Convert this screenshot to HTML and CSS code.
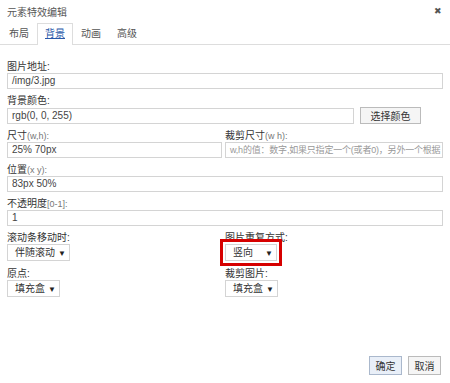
FILE: index.html
```html
<!DOCTYPE html>
<html lang="zh">
<head>
    <meta charset="UTF-8">
    <title>元素特效编辑</title>
    <link rel="stylesheet" href="styles.css">
</head>
<body>
<div class="dialog">
    <div class="header">
        <span class="title">元素特效编辑</span>
        <span class="close">&#x2716;</span>
    </div>

    <div class="tabs">
        <span class="tab">布局</span>
        <span class="tab active">背景</span>
        <span class="tab">动画</span>
        <span class="tab">高级</span>
    </div>

    <div class="form">
        <div class="field">
            <label>图片地址:</label>
            <div class="input">/img/3.jpg</div>
        </div>

        <div class="field">
            <label>背景颜色:</label>
            <div class="color-row">
                <div class="input">rgb(0, 0, 255)</div>
                <button class="btn pick">选择颜色</button>
            </div>
        </div>

        <div class="cols">
            <div class="field">
                <label>尺寸<small>(w,h):</small></label>
                <div class="input">25% 70px</div>
            </div>
            <div class="field">
                <label>裁剪尺寸<small>(w h):</small></label>
                <div class="input placeholder">w,h的值：数字,如果只指定一个(或者0)，另外一个根据</div>
            </div>
        </div>

        <div class="field">
            <label>位置<small>(x y):</small></label>
            <div class="input">83px 50%</div>
        </div>

        <div class="field">
            <label>不透明度<small>[0-1]:</small></label>
            <div class="input">1</div>
        </div>

        <div class="cols">
            <div class="field">
                <label>滚动条移动时:</label>
                <div class="select">伴随滚动<span class="arrow">&#x25BC;</span></div>
            </div>
            <div class="field">
                <label>图片重复方式:</label>
                <div class="select marked">竖向<span class="arrow">&#x25BC;</span></div>
            </div>
        </div>

        <div class="cols">
            <div class="field">
                <label>原点:</label>
                <div class="select">填充盒<span class="arrow">&#x25BC;</span></div>
            </div>
            <div class="field">
                <label>裁剪图片:</label>
                <div class="select">填充盒<span class="arrow">&#x25BC;</span></div>
            </div>
        </div>
    </div>

    <div class="footer">
        <button class="btn ok">确定</button>
        <button class="btn">取消</button>
    </div>
</div>
</body>
</html>
```

FILE: styles.css
```css
body {
    margin: 0;
    font-family: "Liberation Sans", "Noto Sans CJK SC", sans-serif;
    font-size: 10px;
    color: #444;
    background: #fff;
}
.dialog {
    width: 450px;
    height: 383px;
    display: flex;
    flex-direction: column;
}
.header {
    height: 22px;
    padding: 0 7px;
    display: flex;
    justify-content: space-between;
    align-items: center;
}
.title {
    color: #555;
}
.close {
    font-size: 9px;
    color: #555;
    margin-right: 1px;
}
/* tab strip */
.tabs {
    height: 22px;
    display: flex;
    align-items: flex-end;
    border-bottom: 1px solid #ddd;
    padding-left: 1px;
}
.tab {
    padding: 0 7px;
    height: 20px;
    line-height: 20px;
    color: #555;
    border: 1px solid transparent;
    border-bottom: none;
}
.tab.active {
    border-color: #ddd;
    background: #fff;
    margin-bottom: -1px;
    height: 21px;
    color: #2a58a8;
    text-decoration: underline;
}
.form {
    padding: 16px 7px 0;
}
.field {
    margin-bottom: 6px;
    min-width: 0;
}
.field label {
    display: block;
    line-height: 12px;
    color: #333;
}
.field label small {
    font-size: 9px;
    color: #777;
}
.input {
    height: 14px;
    line-height: 14px;
    border: 1px solid #d4d4d4;
    padding: 0 4px;
    white-space: nowrap;
    overflow: hidden;
    color: #444;
}
.input.placeholder {
    color: #999;
    font-size: 9px;
    letter-spacing: -0.2px;
}
.color-row {
    display: flex;
    align-items: center;
    gap: 6px;
}
.color-row .input {
    flex: 1;
}
.btn {
    font-family: inherit;
    font-size: 10px;
    color: #333;
    border: 1px solid #bbb;
    background: #f5f5f5;
    padding: 0;
    margin: 0;
}
.pick {
    width: 61px;
    height: 17px;
    margin-right: 22px;
}
.cols {
    display: grid;
    grid-template-columns: 215px minmax(0, 1fr);
    gap: 3px;
}
.select {
    display: inline-block;
    height: 15px;
    line-height: 15px;
    border: 1px solid #d4d4d4;
    padding: 0 3px 0 7px;
    white-space: nowrap;
    color: #333;
}
.select .arrow {
    font-size: 8px;
    margin-left: 3px;
    color: #222;
}
.cols + .cols .field {
    margin-top: 1px;
}
.marked {
    outline: 3px solid #d60000;
    outline-offset: 2px;
}
.marked .arrow {
    margin-left: 12px;
}
.footer {
    margin-top: auto;
    display: flex;
    justify-content: flex-end;
    gap: 6px;
    padding: 0 9px 8px 0;
}
.footer .btn {
    width: 33px;
    height: 19px;
}
.footer .ok {
    background: #e9eff8;
    border-color: #aab8cc;
}
```
